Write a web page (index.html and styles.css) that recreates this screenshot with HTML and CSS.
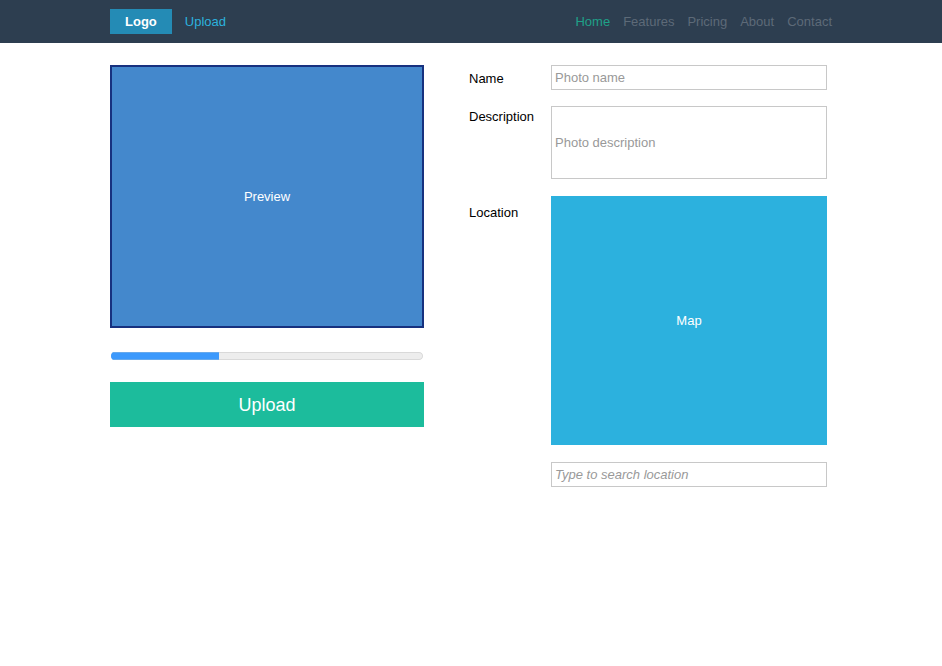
FILE: index.html
```html
<!DOCTYPE html>
<html lang="en">
<head>
<meta charset="utf-8">
<title>Upload photo</title>
<link rel="stylesheet" href="styles.css">
</head>
<body>
<header class="topbar">
  <div class="brand">
    <a class="logo" href="#">Logo</a>
    <a class="upload-link" href="#">Upload</a>
  </div>
  <nav class="nav">
    <a class="current" href="#">Home</a>
    <a href="#">Features</a>
    <a href="#">Pricing</a>
    <a href="#">About</a>
    <a href="#">Contact</a>
  </nav>
</header>
<main>
  <form class="content">
    <section class="photo">
      <div class="preview">Preview</div>
      <progress class="progress" max="312" value="108" aria-label="Upload progress"></progress>
      <button class="submit" type="button">Upload</button>
    </section>
    <section class="fields">
      <div class="details">
        <div class="row">
          <label for="name">Name</label>
          <input id="name" type="text" placeholder="Photo name">
        </div>
        <div class="row">
          <label for="description">Description</label>
          <input class="tall" id="description" type="text" placeholder="Photo description">
        </div>
      </div>
      <div class="row location">
        <label for="location">Location</label>
        <div class="place">
          <div class="map">Map</div>
          <input class="search" id="location" type="text" placeholder="Type to search location">
        </div>
      </div>
    </section>
  </form>
</main>
</body>
</html>
```

FILE: styles.css
```css
* {
  box-sizing: border-box;
}

body {
  margin: 0;
  background: #fff;
  color: #000;
  font: 13px/15px "Liberation Sans", Arial, sans-serif;
}

a {
  text-decoration: none;
}

.topbar {
  display: flex;
  justify-content: space-between;
  align-items: center;
  padding: 9px 110px;
  background: #2d3e50;
}

.brand,
.nav {
  display: flex;
  align-items: center;
  gap: 13px;
}

.logo {
  padding: 5px 15px;
  background: #248bb5;
  color: #fff;
  font-weight: bold;
}

.upload-link {
  color: #2cb1de;
}

.nav a {
  color: #5d6a78;
}

.nav .current {
  color: #1fa188;
}

.content {
  display: grid;
  grid-template-columns: 314fr 358fr;
  align-items: start;
  gap: 45px;
  padding: 22px 115px 22px 110px;
}

.photo {
  display: flex;
  flex-direction: column;
}

.preview,
.map {
  display: flex;
  align-items: center;
  justify-content: center;
  color: #fff;
}

.preview {
  height: 263px;
  border: 2px solid #17317f;
  background: #4488cc;
}

.progress {
  appearance: none;
  width: calc(100% - 2px);
  height: 8px;
  margin: 24px 1px 22px;
  overflow: hidden;
  border: 0;
  border-radius: 4px;
}

.progress::-webkit-progress-bar {
  border-radius: 4px;
  background: #ededed;
  box-shadow: inset 0 0 0 1px #d9d9d9;
}

.progress::-webkit-progress-value {
  background: #3c99fc;
  box-shadow: inset 0 1px #67a9ec, inset 0 -1px #67a9ec;
}

.submit {
  height: 45px;
  padding: 2px 0 0;
  border: 0;
  background: #1cbc9c;
  color: #fff;
  font: 18px/21px "Liberation Sans", Arial, sans-serif;
}

.fields {
  display: grid;
  gap: 17px;
}

.details {
  display: grid;
  gap: 16px;
}

.row {
  display: grid;
  grid-template-columns: 82px 1fr;
  align-items: start;
}

.row label {
  padding-top: 6px;
}

.details .row + .row label {
  padding-top: 3px;
}

.location label {
  padding-top: 9px;
}

input {
  width: 100%;
  height: 25px;
  padding: 0 3px;
  border: 1px solid #c8c8c8;
  border-radius: 0;
  background: #fff;
  font: inherit;
}

input::placeholder {
  color: #999;
}

.tall {
  height: 73px;
}

.place {
  display: grid;
  gap: 17px;
}

.map {
  height: 249px;
  background: #2cb1de;
}

.search {
  font-style: italic;
}
```
